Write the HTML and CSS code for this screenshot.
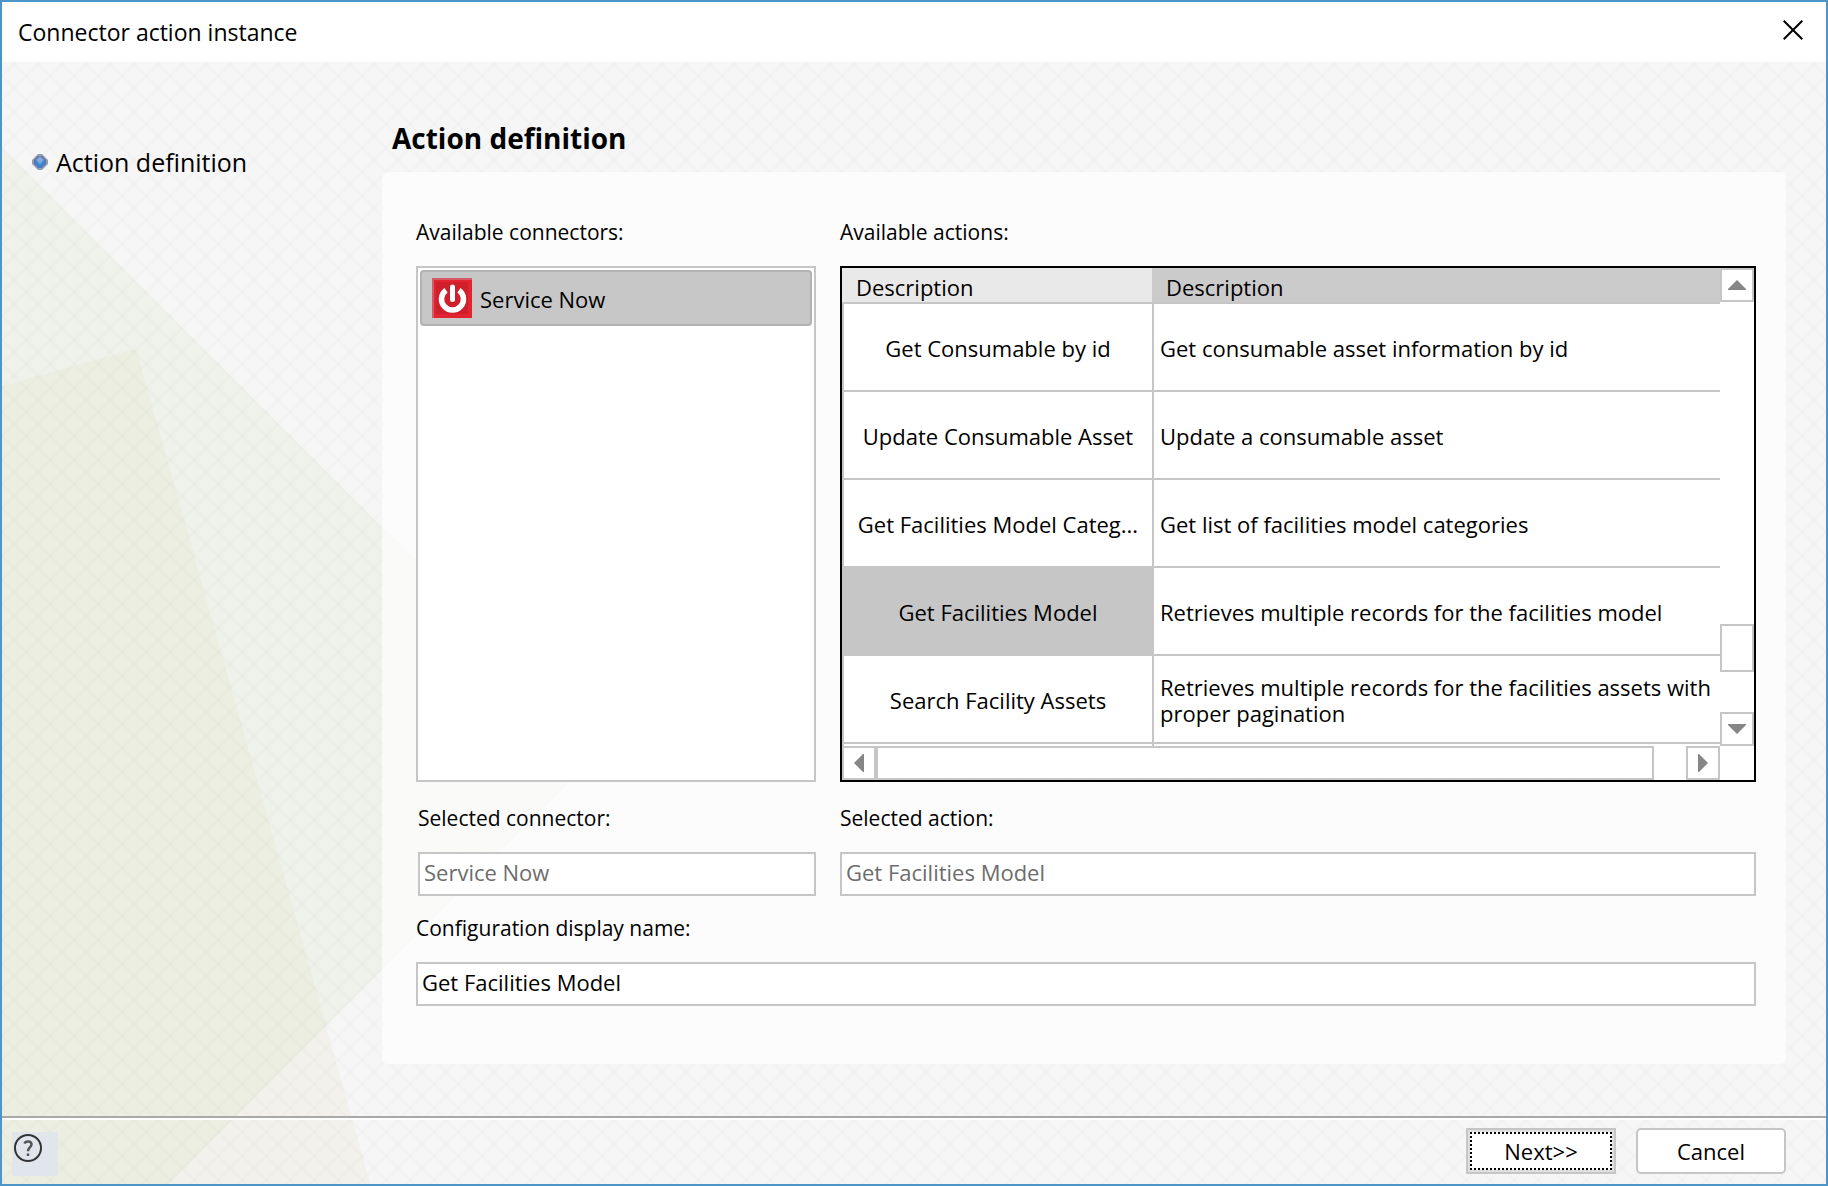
FILE: index.html
```html
<!DOCTYPE html>
<html lang="en">
<head>
<meta charset="utf-8">
<title>Connector action instance</title>
<link rel="stylesheet" href="styles.css">
</head>
<body>
<div class="dialog">
  <header class="titlebar">
    <h1 class="title">Connector action instance</h1>
    <button class="close" type="button" aria-label="Close">
      <svg width="20" height="20" viewBox="0 0 20 20" aria-hidden="true"><path d="M.7.7 19.3 19.3M19.3.7.7 19.3" stroke="#000" stroke-width="2" fill="none"/></svg>
    </button>
  </header>

  <div class="body">
    <svg class="backdrop" width="100%" height="100%" aria-hidden="true">
      <defs>
        <pattern id="lattice" x="12" y="2" width="24" height="24" patternUnits="userSpaceOnUse">
          <path d="M0 0 24 24M24 0 0 24" stroke="#000" stroke-opacity=".01" stroke-width="2"/>
          <path d="M10 10h4v4h-4zM0 0h2v2H0zM22 0h2v2h-2zM0 22h2v2H0zM22 22h2v2h-2z" fill="#000" fill-opacity=".006"/>
        </pattern>
      </defs>
      <path d="M0 86 601 686 165 1124H0z" fill="#eff2ea"/>
      <path d="M0 324 134 287 369 1124H0z" fill="#c8be78" fill-opacity=".075"/>
      <rect width="100%" height="100%" fill="url(#lattice)"/>
    </svg>

    <div class="main">
      <nav class="steps">
        <svg width="16" height="16" viewBox="0 0 16 16" aria-hidden="true">
          <defs><radialGradient id="bead" cx=".5" cy=".6" r=".6"><stop offset="0" stop-color="#2f8de0"/><stop offset=".5" stop-color="#4a80c8"/><stop offset="1" stop-color="#5f7196"/></radialGradient></defs>
          <path d="M6 0h4l6 6v4l-6 6H6l-6-6V6z" fill="#7a88a2" fill-opacity=".8"/>
          <path d="M6 2h4l4 4v4l-4 4H6l-4-4V6z" fill="url(#bead)"/>
          <path d="M8 2l4 4-4 4-4-4z" fill="#a9c4ee" fill-opacity=".6"/>
        </svg>
        <span>Action definition</span>
      </nav>

      <section class="content">
        <h2 class="heading">Action definition</h2>
        <form class="panel">
          <div class="field field-list">
            <span class="label" id="connectors-label">Available connectors:</span>
            <ul class="list" aria-labelledby="connectors-label">
              <li class="item">
                <svg width="40" height="40" viewBox="0 0 40 40" aria-hidden="true">
                  <rect width="40" height="40" fill="#e1242f"/><path d="M0 0h40v2H2v38H0z" fill="#d45a66"/><path d="M4 4h32v32H4z" fill="#cf1f2a"/>
                  <path d="M14 12.200a11 11 0 1 0 13 0" fill="none" stroke="#fff" stroke-width="5.500"/>
                  <path d="M20.500 9v12.500" stroke="#cf1f2a" stroke-width="9" stroke-linecap="round"/>
                  <path d="M20.500 9v12.500" stroke="#fff" stroke-width="5" stroke-linecap="round"/>
                </svg>
                <span>Service Now</span>
              </li>
            </ul>
          </div>

          <div class="field">
            <span class="label" id="actions-label">Available actions:</span>
            <div class="grid-box">
              <table class="actions" aria-labelledby="actions-label">
                <thead><tr><th class="name">Description</th><th class="desc">Description</th></tr></thead>
                <tbody>
                  <tr><td>Get Consumable by id</td><td>Get consumable asset information by id</td></tr>
                  <tr><td>Update Consumable Asset</td><td>Update a consumable asset</td></tr>
                  <tr><td>Get Facilities Model Categ...</td><td>Get list of facilities model categories</td></tr>
                  <tr class="selected"><td>Get Facilities Model</td><td>Retrieves multiple records for the facilities model</td></tr>
                  <tr><td>Search Facility Assets</td><td>Retrieves multiple records for the facilities assets with proper pagination</td></tr>
                  <tr class="next-row"><td></td><td></td></tr>
                </tbody>
              </table>
              <div class="vbar">
                <button type="button" class="arrow" aria-label="Scroll up"><svg width="18" height="10" viewBox="0 0 18 10"><path d="M9 0l9 9v1H0V9z" fill="#868686"/></svg></button>
                <div class="vthumb"></div>
                <button type="button" class="arrow" aria-label="Scroll down"><svg width="18" height="10" viewBox="0 0 18 10"><path d="M9 10l9-9V0H0v1z" fill="#868686"/></svg></button>
              </div>
              <div class="hbar">
                <button type="button" class="arrow" aria-label="Scroll left"><svg width="10" height="18" viewBox="0 0 10 18"><path d="M0 9l9-9h1v18H9z" fill="#868686"/></svg></button>
                <div class="hthumb"></div>
                <button type="button" class="arrow" aria-label="Scroll right"><svg width="10" height="18" viewBox="0 0 10 18"><path d="M10 9L1 0H0v18h1z" fill="#868686"/></svg></button>
              </div>
            </div>
          </div>

          <div class="field field-inset">
            <label class="label" for="connector">Selected connector:</label>
            <input class="input" id="connector" type="text" value="Service Now" disabled>
          </div>
          <div class="field">
            <label class="label" for="action">Selected action:</label>
            <input class="input" id="action" type="text" value="Get Facilities Model" disabled>
          </div>
          <div class="field field-wide">
            <label class="label" for="display-name">Configuration display name:</label>
            <input class="input" id="display-name" type="text" value="Get Facilities Model">
          </div>
        </form>
      </section>
    </div>

    <footer class="footer">
      <button class="help" type="button" aria-label="Help">
        <svg width="28" height="28" viewBox="0 0 28 28" aria-hidden="true">
          <circle cx="14" cy="14" r="13" fill="none" stroke="#333" stroke-width="2"/>
          <path d="M10.500 9.500c1-3 7-2.800 7 .7 0 3-3.500 3.300-3.500 7M14 19.500v2.500" fill="none" stroke="#555" stroke-width="2.500"/>
        </svg>
      </button>
      <button class="button button-focus" type="button"><span class="focus">Next&gt;&gt;</span></button>
      <button class="button" type="button">Cancel</button>
    </footer>
  </div>
</div>
</body>
</html>
```

FILE: styles.css
```css
* { box-sizing: border-box; }

body {
  margin: 0;
  font-family: "Open Sans", "Noto Sans", sans-serif;
  font-size: 22px;
  line-height: 28px;
  color: #000;
}

button, input { font: inherit; color: inherit; }

.dialog {
  display: flex;
  flex-direction: column;
  min-height: 100vh;
  border: 2px solid #4d94c7;
  background: #f6f6f6;
}

.titlebar {
  display: flex;
  align-items: center;
  justify-content: space-between;
  height: 60px;
  padding: 0 23px 0 16px;
  background: #fff;
}

.title { margin: 0; font-size: 23px; font-weight: 400; }

.close {
  display: flex;
  padding: 0 0 4px;
  border: 0;
  background: none;
}

.body {
  position: relative;
  display: flex;
  flex: 1;
  flex-direction: column;
}

.backdrop { position: absolute; inset: 0; }

.main {
  position: relative;
  display: grid;
  flex: 1;
  grid-template-columns: 380px 1fr;
  padding: 58px 40px 52px 0;
}

.steps {
  display: flex;
  align-items: center;
  align-self: start;
  gap: 8px;
  padding: 26px 0 0 30px;
  font-size: 25px;
  line-height: 32px;
}

.heading {
  margin: 0;
  padding: 0 0 16px 10px;
  font-size: 28px;
  line-height: 36px;
}

.panel {
  display: grid;
  grid-template-columns: 400px 1fr;
  gap: 18px 24px;
  padding: 46px 30px 58px 34px;
  border-radius: 6px;
  background: rgba(255, 255, 255, .7);
}

.field {
  display: flex;
  flex-direction: column;
  gap: 20px;
  min-width: 0;
}

.field-list { padding-bottom: 4px; }
.field-inset { padding-left: 2px; }
.field-wide { grid-column: 1 / -1; }
.label { font-size: 21px; }

.list {
  flex: 1;
  margin: 0;
  padding: 2px;
  border: 2px solid #c6c6c6;
  background: #fff;
  list-style: none;
}

.item {
  display: flex;
  align-items: center;
  gap: 8px;
  height: 56px;
  padding: 0 10px;
  border: 2px solid #b3b3b3;
  border-radius: 4px;
  background: #c7c7c7;
}

.item span { padding-top: 2px; }

.grid-box {
  display: grid;
  grid-template-columns: 1fr 34px;
  margin-bottom: 4px;
  border: 2px solid #000;
  background: #fff;
}

.actions {
  width: 100%;
  border-spacing: 0;
  table-layout: fixed;
  line-height: 26px;
}

.actions th {
  height: 36px;
  padding: 4px 14px 0;
  border-bottom: 2px solid #c6c6c6;
  font-weight: 400;
  text-align: left;
}

.actions .name { width: 310px; background: #e9e9e9; }
.actions .desc { background: #cbcbcb; }

.actions td {
  height: 88px;
  padding: 2px 6px 0;
  border: solid #c6c6c6;
  border-width: 0 0 2px 2px;
}

.actions td:first-child { padding: 2px 2px 0; text-align: center; white-space: nowrap; }
.actions .selected td:first-child { background: #c6c6c6; }
.actions .next-row td { height: 2px; border-bottom: 0; }

.vbar, .hbar { display: flex; }
.vbar { flex-direction: column; }

.arrow {
  display: flex;
  align-items: center;
  justify-content: center;
  width: 34px;
  height: 34px;
  padding: 0;
  border: 2px solid #c6c6c6;
  background: #fff;
}

.vthumb {
  height: 48px;
  margin: auto 0 40px;
  border: 2px solid #c6c6c6;
}

.hthumb {
  flex: 1;
  margin-right: 32px;
  border: 2px solid #c6c6c6;
}

.input {
  width: 100%;
  height: 44px;
  padding: 0 4px 4px;
  border: 2px solid #c6c6c6;
  border-radius: 0;
  background: #fff;
}

.input:disabled { color: #6d6d6d; }

.footer {
  position: relative;
  display: flex;
  align-items: flex-start;
  gap: 20px;
  height: 68px;
  padding: 8px 40px 0 10px;
  border-top: 2px solid #a9a9a9;
  box-shadow: inset 0 2px #fff;
}

.help {
  display: flex;
  width: 46px;
  height: 44px;
  margin: 6px auto 0 0;
  padding: 2px;
  border: 0;
  background: #e1e5ec;
}

.button {
  width: 150px;
  height: 46px;
  margin-top: 2px;
  padding: 0;
  border: 2px solid #c6c6c6;
  border-radius: 5px;
  background: #fff;
}

.button-focus { padding: 2px; border-radius: 0; background: #dedede; }

.focus {
  display: flex;
  align-items: center;
  justify-content: center;
  height: 100%;
  border: 2px dotted #000;
  background: #fff;
}
```
